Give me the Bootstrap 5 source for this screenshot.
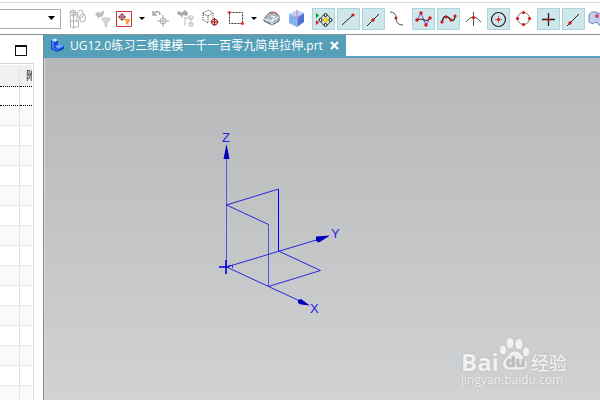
<!DOCTYPE html>
<html lang="zh-CN">
<head>
<meta charset="utf-8">
<meta name="viewport" content="width=device-width, initial-scale=1">
<title>UG12.0练习三维建模</title>
<link href="https://cdn.jsdelivr.net/npm/bootstrap@5.3.0/dist/css/bootstrap.min.css" rel="stylesheet">
<style>
body{font-family:"Open Sans","Noto Sans CJK SC",sans-serif;font-size:12px;background:#fff}
.top-rule{height:1px;background:#dcdcdc;margin-top:2px;flex:none}
.app-bar{height:32px;border-bottom:1px solid #899296;gap:2px}
.tool-group{display:flex;flex:none;gap:2px}
.filter-box{width:61px;height:20px;border:1px solid #adadad;border-left:0;border-radius:0;font-size:12px;padding:0 14px 0 4px;
 --bs-form-select-bg-img:url("data:image/svg+xml,%3Csvg xmlns='http://www.w3.org/2000/svg' viewBox='0 0 8 5'%3E%3Cpath d='M0 0H7L3.5 4Z'/%3E%3C/svg%3E");
 background-position:right 4px center;background-size:8px 5px}
.tool{width:23px;height:22px;padding:0;border:1px solid transparent;border-radius:0;background:none;line-height:0;flex:none}
.tool.on{background:#cfe6ea;border-color:#abd5df}
.tool svg{width:21px;height:20px;display:block;overflow:visible}
.tool.drop{width:10px}
.tool.drop svg{width:8px}
.side-panel{width:43px}
.pin{width:12px;height:11px;border:1px solid #111;border-top-width:2px;border-radius:0;padding:0;background:#fff;margin:10px 0 0 15px;flex:none}
.tree{width:34px;margin-top:7px;border-top:1px solid #d8d8d8;border-right:1px solid #d8d8d8;padding:1px 1px 0 0}
.tree table{width:32px;table-layout:fixed;border-collapse:separate;border-spacing:0;font-size:11px}
.tree th,.tree td{height:20px;padding:0;line-height:16px;border-bottom:1px solid #e9e9e9;white-space:nowrap;overflow:hidden}
.tree tr>:first-child{width:20px;border-right:1px solid #e3e3e3}
.tree th{background:#f0f0f0;height:22px;font-weight:400;padding-left:6px;border-bottom:1px dotted #000}
.tree tbody tr:nth-child(even) td{background:#fafafa}
.tree tbody tr:first-child td{height:19px;border-bottom:1px dotted #000}
.workspace{border-left:1px solid #80898d}
.tab-strip{border-bottom:2px solid #55a0b9}
.doc-tab{height:21px;width:303px;background:#55a0b9;color:#fff;padding-left:7px;margin-left:-1px}
.doc-tab a{color:#fff;margin-left:5px;line-height:20px;white-space:nowrap}
.close-tab{border:0;background:none;padding:0;line-height:0;margin-left:7px}
.viewport{background:linear-gradient(#b6b7b8,#d1d2d3);border-left:1px solid #d9dbdc;border-top:1px solid #b8b8b8}
.viewport>svg{display:block;flex:none}
.watermark{right:28px;bottom:13px;width:111px;color:#f1f1f1;text-shadow:0 0 2px #aaa}
.wm-top{height:37px;margin-bottom:1px}
.wm-name{font:700 24px/20px "Open Sans",sans-serif}
.wm-cn{font:500 18px/20px "Noto Sans CJK SC",sans-serif}
.wm-url{font-size:12px;line-height:14px}
</style>
<script src="https://cdn.jsdelivr.net/npm/bootstrap@5.3.0/dist/js/bootstrap.bundle.min.js" defer></script>
</head>
<body class="vh-100 d-flex flex-column overflow-hidden">
<div class="top-rule"></div>
<header class="app-bar d-flex align-items-center flex-shrink-0 overflow-hidden">
<select class="form-select filter-box flex-shrink-0" aria-label="选择过滤器"><option></option></select>
<div class="tool-group">
<button class="tool" aria-label="装配"><svg viewBox="-4 0 21 20" fill="none" stroke="#b4b4b4"><path d="M2.500 9V18H10.500V11M2.500 12H9M5.500 7V20M1 8.500L5 5H9V13M5.500 1V9M2 3.500H8"/><circle cx="5" cy="4" r="3"/><ellipse cx="12.500" cy="5" rx="3" ry="4"/><ellipse cx="14.500" cy="9" rx="3" ry="4"/></svg></button>
<button class="tool" aria-label="重置过滤器"><svg viewBox="-4 0 21 20"><path d="M2 5L6 2V4H7Q9 4 9 2H11Q11 8 7 8H6V10Z" fill="#bdbdbd"/><path d="M9 9H17V11L14 14V18L12 17V14L9 11Z" fill="#d8d8d8" stroke="#bbb" stroke-width=".7"/></svg></button>
<button class="tool" aria-label="选择过滤"><svg viewBox="0 0 21 20"><path d="M2.500 2.500H17.500V17.500H2.500Z" fill="#fff" stroke="#d12d3a"/><circle cx="8" cy="8" r="2.500" fill="none" stroke="#803535"/><path d="M8 4V12M4 8H12" stroke="#8e3a3a"/><path d="M10 10H16V12L14.500 13.500V16L12 15V13Z" fill="#eea53b"/></svg></button>
</div>
<button class="tool drop" aria-label="更多过滤"><svg viewBox="0 0 8 20"><path d="M0 8H6L3 11Z"/></svg></button>
<div class="tool-group">
<button class="tool" aria-label="旋转点"><svg viewBox="0 0 21 20" fill="none" stroke="#a7a7a7"><path d="M2 2V6H6M2 6C5 1 9 2 9 6" stroke-width="1.500"/><circle cx="12" cy="12" r="3"/><path d="M12 6V18M6 12H18"/></svg></button>
<button class="tool" aria-label="移动组件"><svg viewBox="0 0 21 20"><path d="M1 3L4 2L5 4L9 1L12 4L11 7L7 6L6 9L4 6L2 6Z" fill="#aaa"/><path d="M9 9H15V16M9 8V17M13 7H17V10H13ZM13 14H17V17H13Z" fill="none" stroke="#bdbdbd"/></svg></button>
<button class="tool" aria-label="捕捉体"><svg viewBox="0 0 21 20"><path d="M2 4L8 1L12 4V11M2 4V11L7 14M2 5L7 7V14M7 7L12 4" fill="none" stroke="#333" stroke-dasharray="1 1"/><circle cx="13.500" cy="13" r="3" fill="#f7d4d4" stroke="#9b1616"/><path d="M13.500 9V17M9.500 13H17.500" stroke="#aa1515"/></svg></button>
<button class="tool" aria-label="矩形选择"><svg viewBox="0 0 21 20"><path d="M3.500 3.500H16.500V14.500H3.500Z" fill="none" stroke="#333" stroke-dasharray="2 1"/><path d="M1.500 3.500H5M3.500 2V5M14.500 14.500H18M16.500 13V16" stroke="#df3333" stroke-width="1.500"/></svg></button>
</div>
<button class="tool drop" aria-label="更多选择"><svg viewBox="0 0 8 20"><path d="M0 8H6L3 11Z"/></svg></button>
<div class="tool-group">
<button class="tool" aria-label="隐藏边"><svg viewBox="0 0 21 20"><path d="M1 10L6 4Q12 1 16 7V12L9 16L1 12Z" fill="#b1b9c7" stroke="#555e6d"/><path d="M1 10L9 12L16 8M9 12V16M5 6L12 8M9 12L12 7" fill="none" stroke="#fff"/><path d="M6 7L11 3L14 6" fill="none" stroke="#e26463"/></svg></button>
<button class="tool" aria-label="着色"><svg viewBox="0 0 21 20"><path d="M1 5L9 1L16 4L9 8Z" fill="#bcd3fa"/><path d="M1 5L9 8V18L1 14Z" fill="#87b2f1"/><path d="M9 8L16 4V13L9 18Z" fill="#4c73d8"/><path d="M1 5L9 8L16 4M9 8V18" fill="none" stroke="#a9bbea"/><path d="M9 1V8L13 10" fill="none" stroke="#e06a83" stroke-width=".8"/></svg></button>
<button class="tool on" aria-label="启用捕捉点"><svg viewBox="0 0 21 20"><path d="M3 4V9L6 6.500Z" fill="#00a820"/><path d="M3 11V16L6 13.500Z" fill="#e11717"/><circle cx="12.500" cy="11" r="5" fill="none" stroke="#444"/><g fill="#fff" stroke="#111"><circle cx="12.500" cy="6" r="1.500"/><circle cx="12.500" cy="16" r="1.500"/><circle cx="7.500" cy="11" r="1.500"/><circle cx="17.500" cy="11" r="1.500"/></g><path d="M12.500 8L15 11L12.500 14L10 11Z" fill="#ffd91b" stroke="#b8930c" stroke-width=".5"/></svg></button>
<button class="tool on" aria-label="端点"><svg viewBox="0 0 21 20"><path d="M4 16L15 6" stroke="#222"/><circle cx="15" cy="6" r="1.600" fill="#d31616"/></svg></button>
<button class="tool on" aria-label="中点"><svg viewBox="0 0 21 20"><path d="M4 17L16 5" stroke="#222"/><circle cx="10" cy="11" r="1.700" fill="#d31616"/></svg></button>
<button class="tool" aria-label="控制点"><svg viewBox="0 0 21 20"><path d="M2 3Q8 3 8 9Q8 16 15 16" fill="none" stroke="#555"/><circle cx="8" cy="9" r="1.500" fill="#d42323"/></svg></button>
<button class="tool on" aria-label="极点"><svg viewBox="0 0 21 20"><path d="M4 11L8 4L13 16L17 9" fill="none" stroke="#9238bb"/><path d="M4 11Q8 9 11 11Q14 13 17 9" fill="none" stroke="#222"/><g fill="#d51717"><circle cx="4" cy="11" r="1.700"/><circle cx="8" cy="4" r="1.700"/><circle cx="13" cy="16" r="1.700"/><circle cx="17" cy="9" r="1.700"/></g></svg></button>
<button class="tool on" aria-label="样条点"><svg viewBox="0 0 21 20"><path d="M4 13Q6 4 11 9Q16 15 17 7" fill="none" stroke="#222" stroke-width="1.300"/><g fill="#d51717"><circle cx="4" cy="13" r="1.600"/><circle cx="8" cy="8" r="1.600"/><circle cx="13" cy="11" r="1.600"/><circle cx="17" cy="7" r="1.600"/></g></svg></button>
<button class="tool" aria-label="交点"><svg viewBox="0 0 21 20"><path d="M10.500 3V17M3 13Q10 3 18 13" fill="none" stroke="#555"/><circle cx="10.500" cy="8.500" r="1.600" fill="#d51717"/></svg></button>
<button class="tool on" aria-label="圆心"><svg viewBox="0 0 21 20"><circle cx="10.500" cy="10.500" r="7" fill="none" stroke="#222" stroke-width="1.200"/><path d="M7 10.500H14M10.500 7V14" stroke="#d52222" stroke-width=".7"/><circle cx="10.500" cy="10.500" r="1.500" fill="#d51717"/></svg></button>
<button class="tool" aria-label="象限点"><svg viewBox="0 0 21 20"><circle cx="10.500" cy="9.500" r="6" fill="none" stroke="#777"/><g fill="#d51717"><circle cx="10.500" cy="3.500" r="1.600"/><circle cx="10.500" cy="15.500" r="1.600"/><circle cx="4.500" cy="9.500" r="1.600"/><circle cx="16.500" cy="9.500" r="1.600"/></g></svg></button>
<button class="tool on" aria-label="现有点"><svg viewBox="0 0 21 20"><path d="M4 10.500H17M10.500 4V17" stroke="#222" stroke-width="1.300"/><circle cx="10.500" cy="10.500" r="1.600" fill="#d51717"/></svg></button>
<button class="tool on" aria-label="曲线上的点"><svg viewBox="0 0 21 20"><path d="M4 17L16 5" stroke="#222"/><circle cx="7" cy="14" r="1.700" fill="#d51717"/></svg></button>
<button class="tool" aria-label="面上的点"><svg viewBox="0 0 21 20"><path d="M1 13V6Q3 2 8 3L17 7V18L11 16Q8 11 5 15Z" fill="#bfd0f1" stroke="#7085b5"/><circle cx="9" cy="7" r="2" fill="#d94356"/></svg></button>
</div>
</header>
<main class="d-flex flex-grow-1 overflow-hidden">
<aside class="side-panel d-flex flex-column flex-shrink-0">
<button class="pin" aria-label="还原窗口"></button>
<div class="tree flex-grow-1 overflow-hidden">
<table>
<thead><tr><th aria-label="名称"></th><th>附</th></tr></thead>
<tbody><tr><td></td><td></td></tr><tr><td></td><td></td></tr><tr><td></td><td></td></tr><tr><td></td><td></td></tr><tr><td></td><td></td></tr><tr><td></td><td></td></tr><tr><td></td><td></td></tr><tr><td></td><td></td></tr><tr><td></td><td></td></tr><tr><td></td><td></td></tr><tr><td></td><td></td></tr><tr><td></td><td></td></tr><tr><td></td><td></td></tr><tr><td></td><td></td></tr><tr><td></td><td></td></tr><tr><td></td><td></td></tr></tbody>
</table>
</div>
</aside>
<section class="workspace d-flex flex-column flex-grow-1 overflow-hidden">
<div class="tab-strip flex-shrink-0">
<div class="doc-tab d-flex align-items-center">
<svg width="15" height="15" viewBox="0 0 15 15"><path d="M1 2L5 0L8 2V7L10 6L14 8V11L7 14L1 11Z" fill="#1645cd"/><path d="M1 2L5 0L8 2L5 4Z" fill="#c3dcff"/><path d="M5 8L10 6L14 8L8 11Z" fill="#72a7ff"/><path d="M2 3L4 4V10L8 12V13L2 10Z" fill="#4b82f2"/></svg>
<a href="#" class="text-decoration-none">UG12.0练习三维建模一千一百零九简单拉伸.prt</a>
<button class="close-tab" aria-label="关闭"><svg width="9" height="9" viewBox="0 0 9 9"><path d="M1 1L8 8M8 1L1 8" stroke="#fff" stroke-width="2.200"/></svg></button>
</div>
</div>
<div class="viewport d-flex flex-grow-1 position-relative overflow-hidden">
<svg width="320" height="270" viewBox="45 59 320 270" fill="none" stroke="#1515df" stroke-width="1" role="img" aria-label="坐标系草图">
<path d="M226.500 267V158M268.500 286.500V224.500" stroke="#5252e8"/>
<path d="M278.500 189V251" stroke="#0000ee"/>
<path d="M226.500 205L278.500 189M226.500 205L268.500 224.500M226.500 267L318 239.500M226.500 267L301 301.500M278.500 251L320.500 270.500L268.500 286.500" stroke-width=".9"/>
<path d="M219 267H229M226 260V274" stroke="#0000df" stroke-width="1.600"/><path d="M229 267V265.500H232.500V268" stroke="#0000df" stroke-width=".8"/>
<g fill="#0000bd" stroke="none"><path d="M226.500 144L223.500 159H229.500ZM330 235.500L316 236.500V241L319 242.500ZM310 305.500L301 299L298 300V303L301 304.500Z"/></g>
<g fill="#2525e3" stroke="none" font-family="Liberation Sans, sans-serif" font-size="13"><text x="222" y="142">Z</text><text x="331" y="238">Y</text><text x="310" y="313">X</text></g>
</svg>
<div class="watermark position-absolute">
<div class="wm-top d-flex align-items-end">
<span class="wm-name">Bai</span>
<svg class="flex-shrink-0" width="32" height="35" viewBox="1 1 32 35" role="img" aria-label="du"><g fill="#f1f1f1" stroke="#b9b9bb" stroke-width=".6"><ellipse cx="5" cy="14" rx="3.500" ry="5"/><ellipse cx="12" cy="7" rx="4" ry="5.500"/><ellipse cx="21" cy="8" rx="4" ry="5.500"/><ellipse cx="28" cy="16" rx="3.500" ry="5"/><path d="M17 15C11 15 11 20 7 23C3 26 4 34 11 34H23C31 34 31 26 26 22C23 18 22 15 17 15Z"/></g><text x="8" y="31" font-family="Open Sans, sans-serif" font-size="15" font-weight="700" fill="#bbbcbe">du</text></svg>
<span class="wm-cn text-nowrap">经验</span>
</div>
<div class="wm-url text-nowrap">jingyan.baidu.com</div>
</div>
</div>
</section>
</main>
</body>
</html>
